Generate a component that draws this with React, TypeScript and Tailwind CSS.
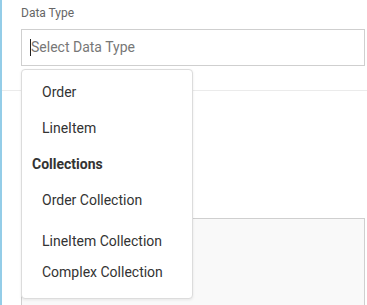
export default function App() {
  const items = [
    { label: "Order", h: "h-[36px]" },
    { label: "LineItem", h: "h-[36px]" },
  ]
  return (
    <div
      className="relative h-[305px] w-full overflow-hidden border-l-2 border-[#94cde8] bg-white"
      style={{ fontFamily: "Roboto, 'Liberation Sans', sans-serif" }}
    >
      <div className="border-b border-[#ebebeb] pl-[19px] pr-[2px] pt-[5px] h-[91px]">
        <div className="text-[12px] leading-[16px] text-[#666]">Data Type</div>
        <div className="mt-[8px] flex h-[37px] items-center border border-[#cfcfcf] pl-[8px]">
          <span className="h-[17px] w-px bg-[#222]" />
          <span className="text-[14px] text-[#777]">Select Data Type</span>
        </div>
      </div>
      <div className="pl-[19px] pr-[2px] pt-[127px]">
        <div className="h-[100px] border border-[#cfcfcf] bg-[#f9f9f9]" />
      </div>

      <div className="absolute left-[19px] top-[69px] h-[230px] w-[172px] rounded-[4px] border border-[#dcdcdc] bg-white pt-[4px] text-[14px] text-[#333] shadow-[0_1px_3px_rgba(0,0,0,0.08)]">
        {items.map((it) => (
          <div key={it.label} className={`flex items-center pl-[20px] ${it.h}`}>
            {it.label}
          </div>
        ))}
        <div className="flex h-[36px] items-center pl-[10px] font-bold">Collections</div>
        <div className="flex h-[36px] items-center pl-[20px]">Order Collection</div>
        <div className="mt-[5px] flex h-[36px] items-center pl-[20px]">LineItem Collection</div>
        <div className="flex h-[26px] items-center pl-[20px]">Complex Collection</div>
      </div>
    </div>
  )
}
